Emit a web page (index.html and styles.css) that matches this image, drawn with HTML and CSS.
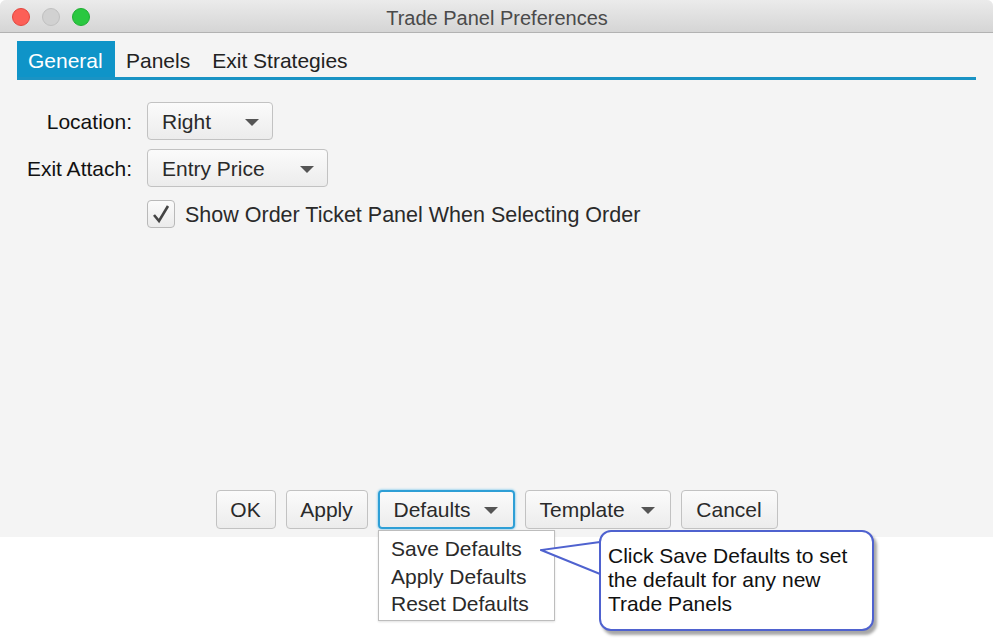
FILE: index.html
```html
<!DOCTYPE html>
<html>
<head>
<meta charset="utf-8">
<link rel="stylesheet" href="styles.css">
</head>
<body>
<div class="window">
  <div class="titlebar">
    <div class="lights">
      <span class="light red"></span>
      <span class="light grey"></span>
      <span class="light green"></span>
    </div>
    <div class="title">Trade Panel Preferences</div>
  </div>
  <div class="content">
    <div class="tabs">
      <div class="tab active">General</div>
      <div class="tab">Panels</div>
      <div class="tab">Exit Strategies</div>
    </div>
    <div class="form">
      <div class="label">Location:</div>
      <div class="combo combo-loc"><span>Right</span><span class="arrow"></span></div>
      <div class="label">Exit Attach:</div>
      <div class="combo combo-exit"><span>Entry Price</span><span class="arrow"></span></div>
      <div></div>
      <label class="check">
        <span class="box"><svg width="20" height="20" viewBox="0 0 20 20"><path d="M3 11 L8 17 L17 2" fill="none" stroke="#444" stroke-width="2.6" stroke-linejoin="miter"/></svg></span>
        <span>Show Order Ticket Panel When Selecting Order</span>
      </label>
    </div>
    <div class="spacer"></div>
    <div class="buttons">
      <div class="btn btn-ok">OK</div>
      <div class="btn btn-apply">Apply</div>
      <div class="btn btn-menu focused"><span>Defaults</span><span class="arrow"></span></div>
      <div class="btn btn-menu btn-template"><span>Template</span><span class="arrow"></span></div>
      <div class="btn btn-cancel">Cancel</div>
    </div>
  </div>
</div>
<div class="menu">
  <div class="item">Save Defaults</div>
  <div class="item">Apply Defaults</div>
  <div class="item">Reset Defaults</div>
</div>
<div class="callout">
  <svg class="pointer" width="64" height="40" viewBox="0 0 64 40"><polygon points="60,2 1,10 60,34" fill="#fff" stroke="#4f62cf" stroke-width="2" stroke-linejoin="miter"/></svg>
  <div class="callout-text">Click Save Defaults to set the default for any new Trade Panels</div>
</div>
</body>
</html>
```

FILE: styles.css
```css
* { box-sizing: border-box; }
html, body { margin: 0; padding: 0; background: #ffffff; }
body {
  width: 993px;
  height: 639px;
  position: relative;
  overflow: hidden;
  font-family: "Liberation Sans", Arial, sans-serif;
  color: #2a2a2a;
}
.window {
  width: 993px;
  height: 537px;
  background: #f4f4f4;
  border-radius: 6px 6px 0 0;
  display: flex;
  flex-direction: column;
}
.titlebar {
  height: 33px;
  position: relative;
  background: linear-gradient(#ebebeb, #d5d5d5);
  border-bottom: 1px solid #b2b2b2;
  border-radius: 6px 6px 0 0;
  display: flex;
  align-items: center;
  justify-content: center;
}
.lights {
  position: absolute;
  left: 12px;
  top: 8px;
  display: flex;
  gap: 12px;
}
.light {
  width: 18px;
  height: 18px;
  border-radius: 50%;
  display: block;
}
.red { background: #fc5f57; border: 1px solid #e2463f; }
.grey { background: #d1d1d1; border: 1px solid #c0c0c0; }
.green { background: #2ac840; border: 1px solid #1fae33; }
.title {
  font-size: 20px;
  color: #4a4a4a;
  padding-top: 4px;
  padding-left: 1px;
}
.content {
  flex: 1;
  display: flex;
  flex-direction: column;
  padding: 8px 17px 8px 17px;
}
.tabs {
  display: flex;
  border-bottom: 3px solid #1a93c4;
  height: 39px;
}
.tab {
  height: 36px;
  line-height: 39px;
  font-size: 21px;
  padding: 0 11px 0 11px;
  color: #222;
}
.tab.active {
  background: #0f94c8;
  color: #fff;
  width: 98px;
}
.form {
  display: grid;
  grid-template-columns: 115px auto;
  column-gap: 15px;
  row-gap: 9px;
  margin-top: 22px;
  justify-items: start;
  align-items: center;
}
.label {
  justify-self: end;
  font-size: 21px;
  color: #111;
  padding-top: 2px;
}
.combo {
  height: 38px;
  border: 1px solid #c2c2c2;
  border-radius: 4px;
  background: linear-gradient(#fbfbfb, #ececec);
  display: flex;
  align-items: center;
  justify-content: space-between;
  font-size: 21px;
  color: #2a2a2a;
  padding: 2px 13px 0 14px;
}
.combo-loc { width: 126px; }
.combo-exit { width: 181px; }
.arrow {
  width: 0;
  height: 0;
  border-left: 7px solid transparent;
  border-right: 7px solid transparent;
  border-top: 7px solid #555;
}
.check {
  display: flex;
  align-items: center;
  gap: 10px;
  font-size: 21.5px;
  color: #2a2a2a;
  margin-top: 4px;
}
.check span:last-child { padding-top: 2px; }
.box {
  width: 28px;
  height: 28px;
  border: 1px solid #b9b9b9;
  border-radius: 4px;
  background: linear-gradient(#fbfbfb, #ebebeb);
  display: flex;
  align-items: center;
  justify-content: center;
}
.spacer { flex: 1; }
.buttons {
  display: flex;
  justify-content: center;
  gap: 10px;
}
.btn {
  height: 39px;
  border: 1px solid #c2c2c2;
  border-radius: 4px;
  background: linear-gradient(#fbfbfb, #ececec);
  font-size: 21px;
  color: #2a2a2a;
  display: flex;
  align-items: center;
  justify-content: center;
  padding-top: 1px;
}
.btn-ok { width: 60px; }
.btn-apply { width: 82px; }
.btn-menu {
  justify-content: space-between;
  padding: 1px 15px 0 14px;
}
.focused {
  width: 137px;
  border: 2px solid #2e9fd6;
  box-shadow: 0 0 2px 1px #a8d8ef;
}
.btn-template { width: 146px; }
.btn-cancel { width: 97px; }
.menu {
  position: absolute;
  left: 378px;
  top: 530px;
  width: 177px;
  height: 91px;
  background: #fff;
  border: 1px solid #bdbdbd;
  box-shadow: 0 1px 2px rgba(0,0,0,0.12);
  padding: 4px 0 0 12px;
}
.item {
  font-size: 21px;
  line-height: 27.5px;
  color: #2a2a2a;
}
.callout {
  position: absolute;
  left: 599px;
  top: 530px;
  width: 275px;
  height: 101px;
  background: #fff;
  border: 2px solid #4f62cf;
  border-radius: 12px;
  box-shadow: 3px 4px 3px rgba(0,0,0,0.35);
  padding: 12px 16px 0 7px;
}
.pointer {
  position: absolute;
  left: -61px;
  top: 8px;
}
.callout-text {
  font-size: 21px;
  line-height: 24px;
  color: #111;
}
```
